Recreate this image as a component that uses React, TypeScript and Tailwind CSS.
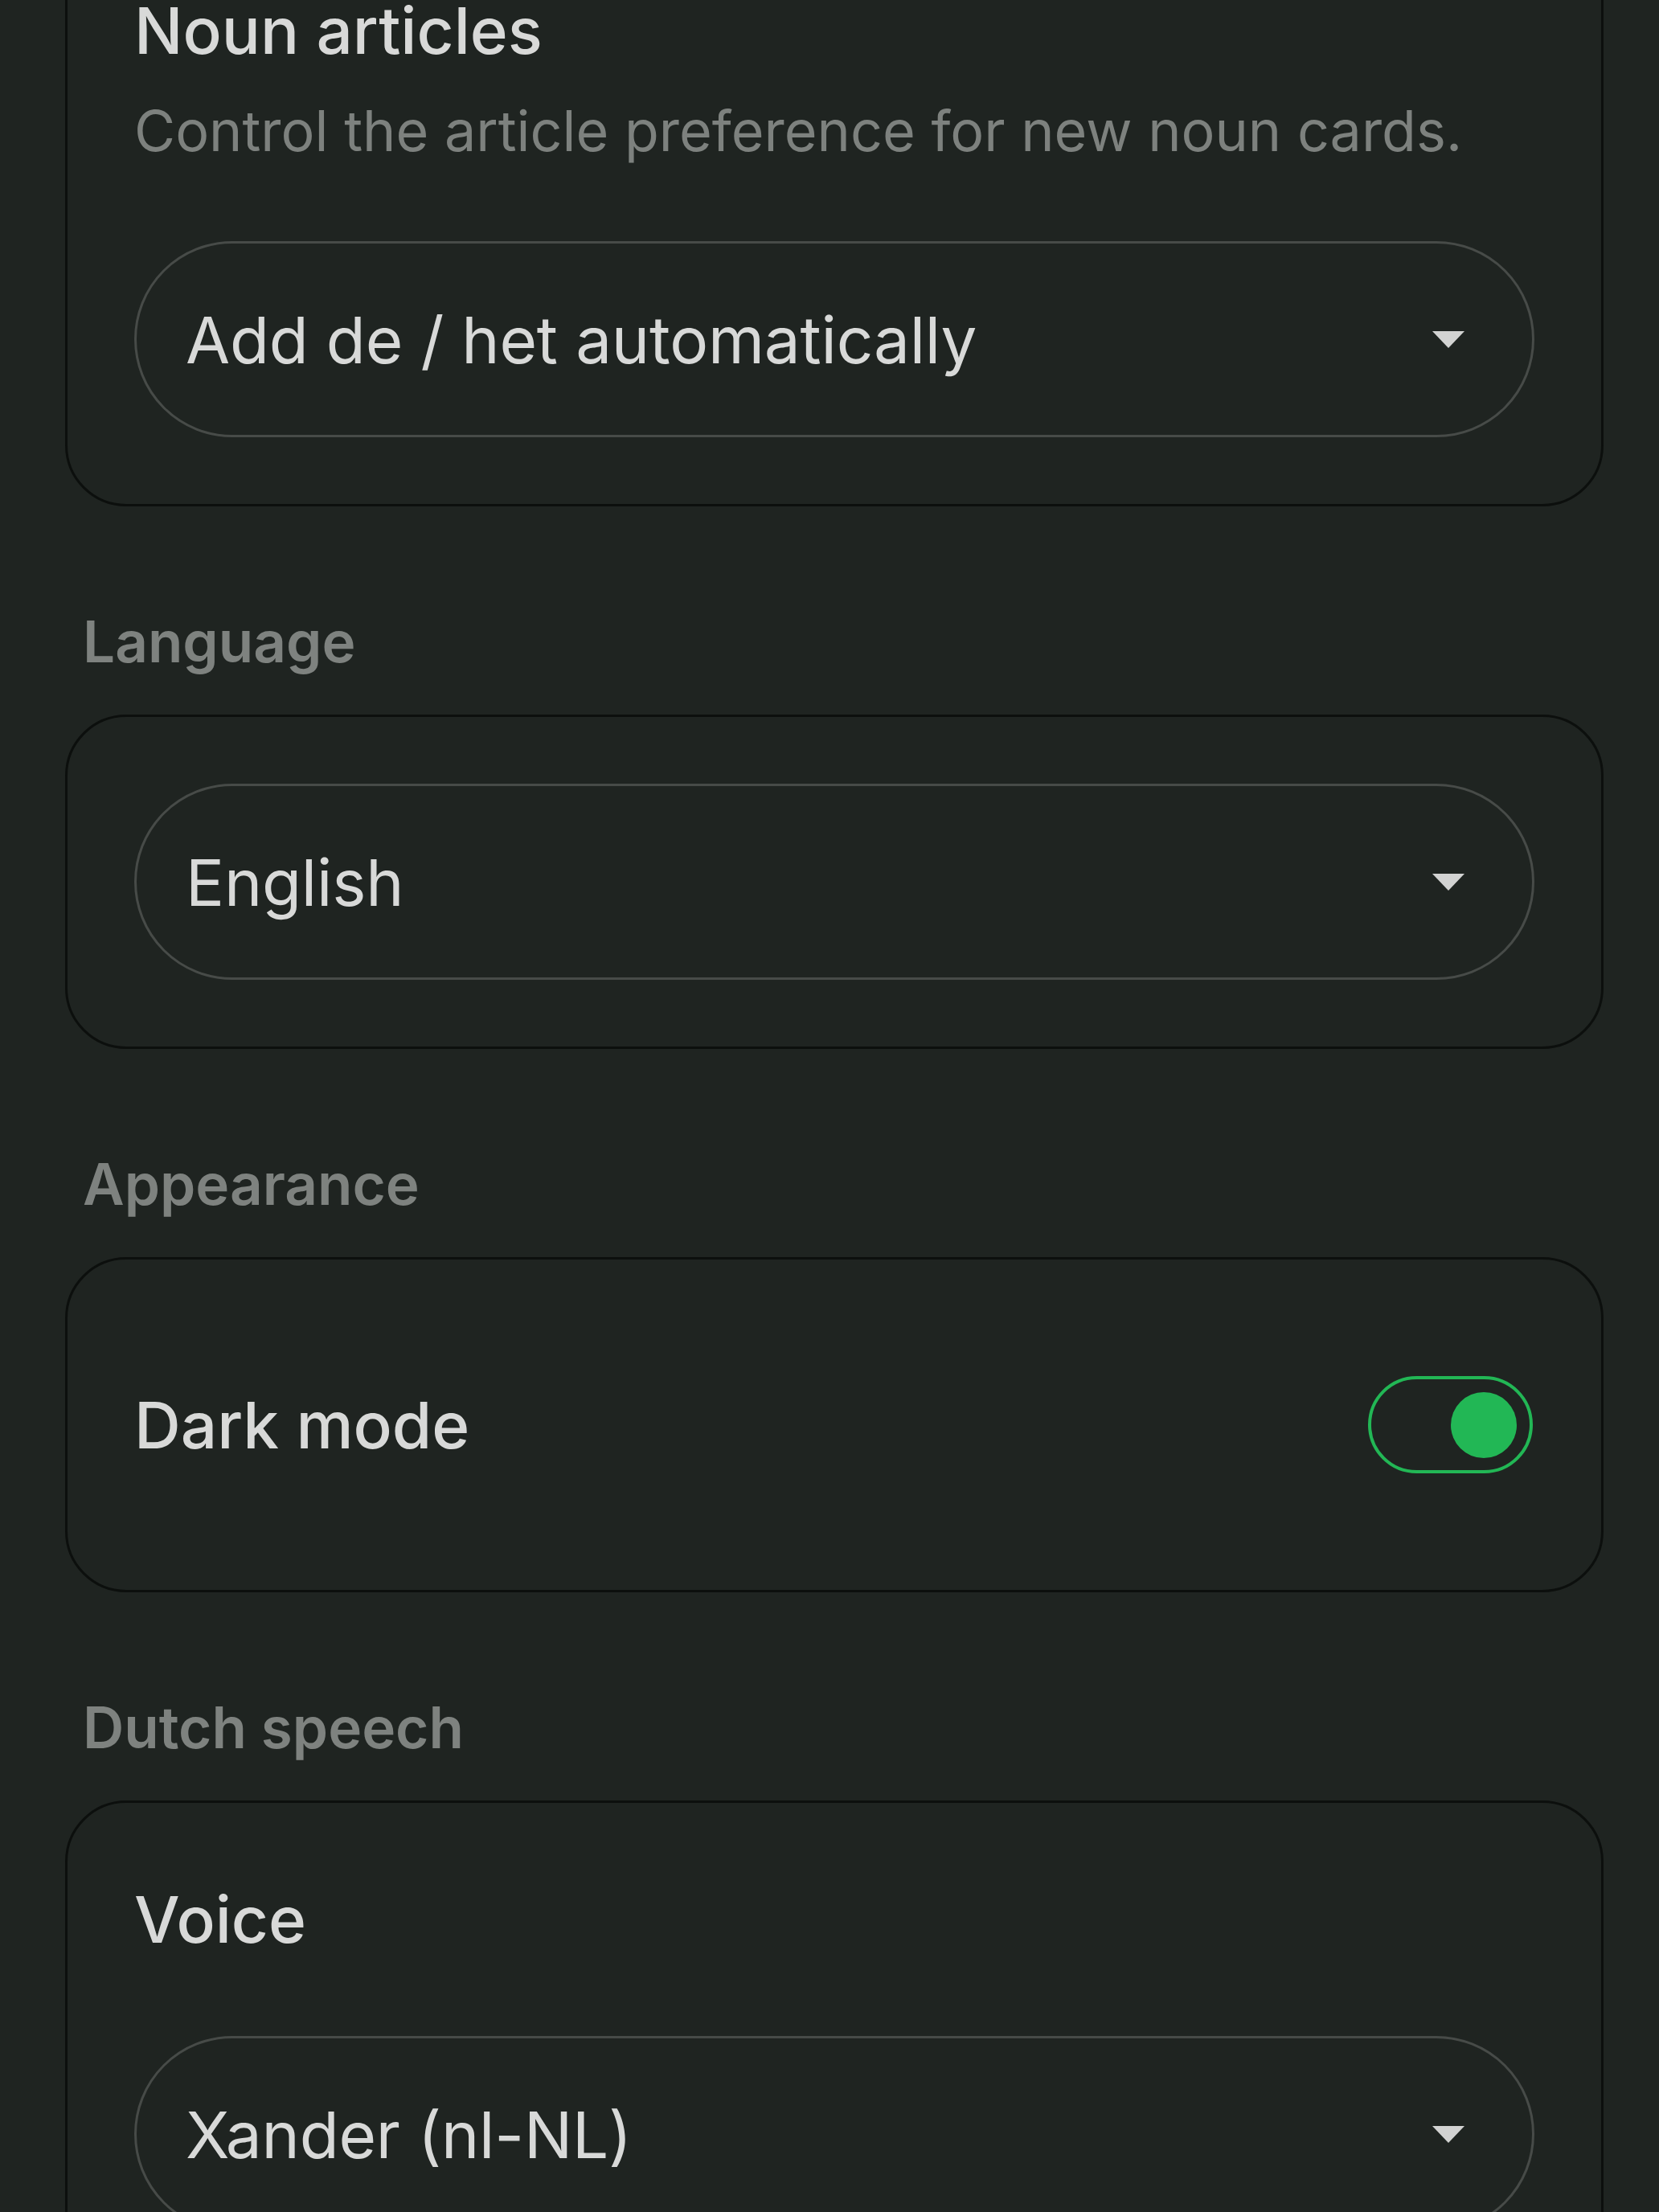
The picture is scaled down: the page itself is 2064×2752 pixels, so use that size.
const Caret = () => (
	<svg width="40" height="21" viewBox="0 0 40 21" className="shrink-0">
		<polygon points="0,0 40,0 20,21" fill="#d2d3d2" />
	</svg>
)

const Select = ({ value, className = "" }: { value: string; className?: string }) => (
	<div
		className={`flex h-[244px] items-center justify-between rounded-full border-[3px] border-[#474b48] pl-[61px] pr-[84px] ${className}`}
	>
		<span className="text-[80px] leading-[97px] tracking-[-0.2px] text-[#d8d9d8]">{value}</span>
		<Caret />
	</div>
)

const Label = ({ children }: { children: string }) => (
	<div className="mt-[125px] mb-[48px] pl-[22px] text-[71px] leading-[86px] font-semibold text-[#7e827f]">
		{children}
	</div>
)

const Toggle = () => (
	<div className="flex h-[121px] w-[205px] items-center justify-end rounded-full border-[4px] border-[#22b755] pr-[16px]">
		<div className="h-[82px] w-[82px] rounded-full bg-[#22b755]" />
	</div>
)

export default function App() {
	return (
		<div className="h-[2752px] overflow-hidden bg-[#1f2421] font-['Inter',sans-serif]">
			<div className="-mt-[110px] ml-[81px] flex w-[1914px] flex-col">
				<section className="rounded-[76px] border-[3px] border-[#0c0f0d] px-[83px] pt-[96px] pb-[83px]">
					<h3 className="text-[80px] leading-[97px] font-medium text-[#d8d9d8]">Noun articles</h3>
					<p className="mt-[33px] text-[70px] leading-[88px] text-[#7d817e]">
						Control the article preference for new noun cards.
					</p>
					<Select value="Add de / het automatically" className="mt-[93px]" />
				</section>

				<Label>Language</Label>
				<section className="rounded-[76px] border-[3px] border-[#0c0f0d] p-[83px]">
					<Select value="English" />
				</section>

				<Label>Appearance</Label>
				<section className="flex h-[417px] items-center justify-between rounded-[76px] border-[3px] border-[#0c0f0d] pl-[83px] pr-[85px]">
					<span className="text-[80px] leading-[97px] font-medium text-[#d8d9d8]">Dark mode</span>
					<Toggle />
				</section>

				<Label>Dutch speech</Label>
				<section className="rounded-[76px] border-[3px] border-[#0c0f0d] px-[83px] pt-[96px] pb-[83px]">
					<h3 className="text-[80px] leading-[97px] font-medium text-[#d8d9d8]">Voice</h3>
					<Select value="Xander (nl-NL)" className="mt-[97px]" />
				</section>
			</div>
		</div>
	)
}
